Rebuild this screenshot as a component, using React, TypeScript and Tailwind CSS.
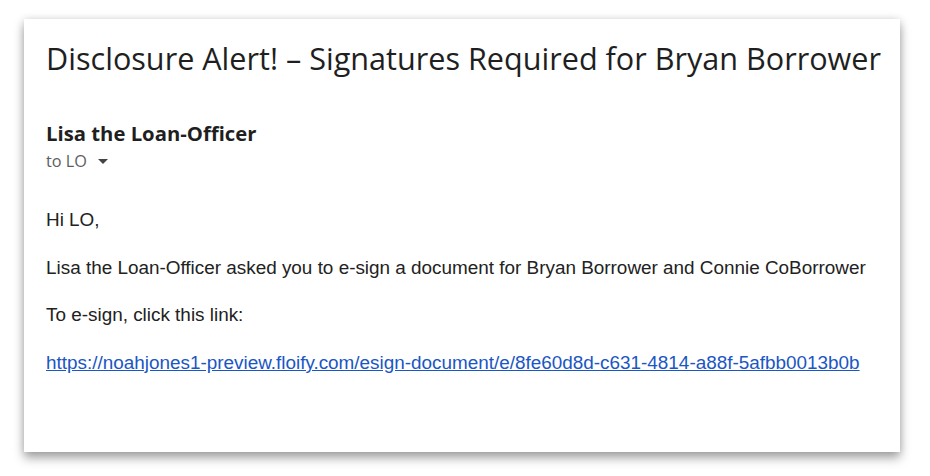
import React from 'react';

export default function App() {
    return (
        <div className="w-[930px] h-[476px] bg-white pt-[19px] pl-[24px]">
            <div className="w-[876px] h-[433px] bg-white shadow-[0_6px_10px_rgba(0,0,0,0.35),0_0_8px_rgba(0,0,0,0.12)] px-[22px] pt-[21px]">
                {/* Subject */}
                <h1 className="font-['Open_Sans',sans-serif] text-[30.6px] leading-[36px] text-[#1f1f1f] whitespace-nowrap">
                    Disclosure Alert! – Signatures Required for Bryan Borrower
                </h1>

                {/* Sender */}
                <div className="mt-[45px] font-['Open_Sans',sans-serif]">
                    <p className="text-[20.3px] leading-[24px] font-bold text-[#1f1f1f]">Lisa the Loan-Officer</p>
                    <p className="mt-[6px] flex items-center gap-[11px] text-[16.3px] leading-[20px] text-[#5e5e5e]">
                        to LO
                        <svg width="10" height="6" viewBox="0 0 10 6" className="mt-[1px]">
                            <path d="M0 0 L10 0 L5 5 Z" fill="#444" />
                        </svg>
                    </p>
                </div>

                {/* Body */}
                <div className="mt-[38px] font-['Liberation_Sans',Arial,sans-serif] text-[18.9px] leading-[22px] text-[#222] space-y-[25.67px] whitespace-nowrap">
                    <p>Hi LO,</p>
                    <p>Lisa the Loan-Officer asked you to e-sign a document for Bryan Borrower and Connie CoBorrower</p>
                    <p>To e-sign, click this link:</p>
                    <p>
                        <a href="#" className="text-[#1a56c4] underline">
                            https://noahjones1-preview.floify.com/esign-document/e/8fe60d8d-c631-4814-a88f-5afbb0013b0b
                        </a>
                    </p>
                </div>
            </div>
        </div>
    );
}
